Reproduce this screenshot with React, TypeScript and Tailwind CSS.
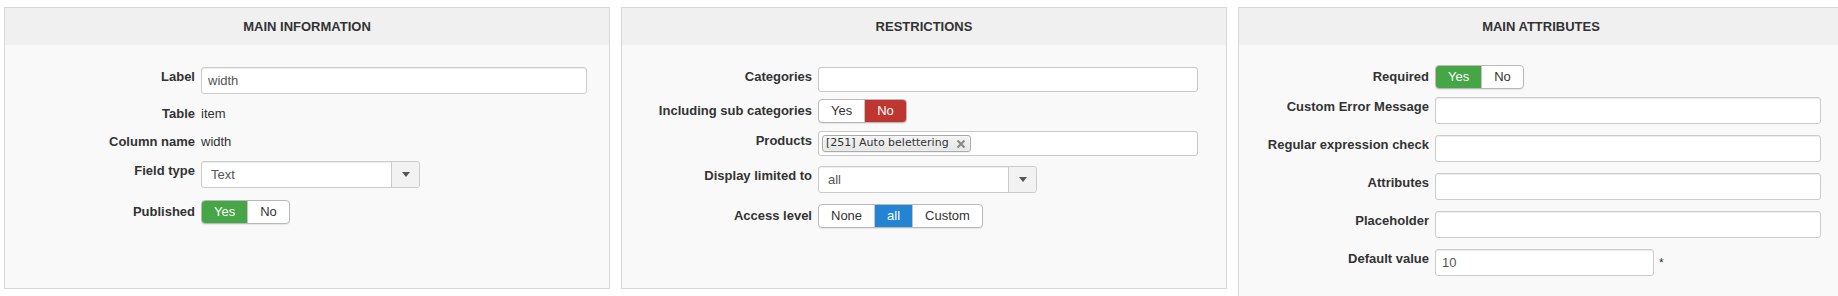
import type { ReactNode } from 'react';

const Panel = ({ title, className, children }: { title: string; className: string; children: ReactNode }) => {
  return (
    <div className={`w-[606px] shrink-0 border border-[#d8d8d8] bg-[#f9f9f9] ${className}`}>
      <div className="h-[37px] flex items-center justify-center bg-[#f0f0f0] text-[13px] font-bold uppercase text-[#333]">
        {title}
      </div>
      <div className="flex flex-col">{children}</div>
    </div>
  );
};

const Row = ({ label, className, labelClass, children }: { label: string; className: string; labelClass: string; children: ReactNode }) => {
  return (
    <div className={`flex items-start ${className}`}>
      <div className={`w-[190px] shrink-0 text-right text-[13px] font-bold leading-[19px] text-[#333] ${labelClass}`}>
        {label}
      </div>
      <div className="ml-[6px] flex items-start">{children}</div>
    </div>
  );
};

const TextInput = ({ value, className }: { value?: string; className: string }) => {
  return (
    <input
      readOnly
      value={value ?? ''}
      className={`h-[27px] rounded-[3px] border border-[#ccc] bg-white px-[6px] text-[13px] text-[#555] shadow-[inset_0_1px_1px_rgba(0,0,0,0.075)] outline-none ${className}`}
    />
  );
};

const Caret = () => (
  <svg width="8" height="5" viewBox="0 0 8 5">
    <path d="M0 0 L8 0 L4 5 Z" fill="#555" />
  </svg>
);

const Select = ({ value }: { value: string }) => {
  return (
    <div className="flex h-[27px] w-[219px] rounded-[3px] border border-[#ccc] bg-white shadow-[inset_0_1px_1px_rgba(0,0,0,0.075)]">
      <div className="flex-1 pl-[9px] text-[13px] leading-[25px] text-[#555]">{value}</div>
      <div className="flex w-[28px] items-center justify-center rounded-r-[3px] border-l border-[#ccc] bg-[#f2f2f2]">
        <Caret />
      </div>
    </div>
  );
};

type Opt = { text: string; on?: string };

const Toggle = ({ options }: { options: Opt[] }) => {
  return (
    <div className="flex h-[24px] overflow-hidden rounded-[4px] border border-[#b9b9b9] bg-white shadow-[0_1px_1px_rgba(0,0,0,0.08)]">
      {options.map((o, i) => (
        <div
          key={o.text}
          className={`flex items-center px-[12px] text-[13px] ${i > 0 ? 'border-l border-[#c4c4c4]' : ''} ${o.on ? `${o.on} text-white` : 'text-[#333]'}`}
        >
          {o.text}
        </div>
      ))}
    </div>
  );
};

const ChosenBox = ({ children }: { children?: ReactNode }) => {
  return (
    <div className="flex h-[25px] w-[380px] items-start rounded-[3px] border border-[#c8c8c8] bg-white pl-[3px] pt-[3px]">
      {children}
    </div>
  );
};

const App = () => {
  return (
    <div className="flex h-[296px] w-[1838px] items-start gap-[11px] overflow-hidden bg-white pl-[4px] pt-[7px] font-['Liberation_Sans',Arial,sans-serif]">
      <Panel title="Main Information" className="h-[282px]">
        <Row label="Label" className="mt-[22px]" labelClass="">
          <TextInput value="width" className="w-[386px]" />
        </Row>
        <Row label="Table" className="mt-[10px]" labelClass="">
          <span className="text-[13px] leading-[19px] text-[#333]">item</span>
        </Row>
        <Row label="Column name" className="mt-[9px]" labelClass="">
          <span className="text-[13px] leading-[19px] text-[#333]">width</span>
        </Row>
        <Row label="Field type" className="mt-[10px]" labelClass="">
          <Select value="Text" />
        </Row>
        <Row label="Published" className="mt-[12px]" labelClass="pt-[2px]">
          <Toggle options={[{ text: 'Yes', on: 'bg-[#46a546]' }, { text: 'No' }]} />
        </Row>
      </Panel>

      <Panel title="Restrictions" className="h-[282px]">
        <Row label="Categories" className="mt-[22px]" labelClass="">
          <ChosenBox />
        </Row>
        <Row label="Including sub categories" className="mt-[7px]" labelClass="pt-[2px]">
          <Toggle options={[{ text: 'Yes' }, { text: 'No', on: 'bg-[#bd362f]' }]} />
        </Row>
        <Row label="Products" className="mt-[8px]" labelClass="">
          <ChosenBox>
            <div className="flex h-[17px] items-center rounded-[3px] border border-[#aaa] bg-gradient-to-b from-[#f4f4f4] to-[#e6e6e6] pl-[3px] pr-[4px] font-['DejaVu_Sans',Verdana,sans-serif] text-[11px] text-[#333] shadow-[0_0_2px_white_inset,0_1px_0_rgba(0,0,0,0.05)]">
              <span>[251] Auto belettering</span>
              <svg className="ml-[7px]" width="10" height="10" viewBox="0 0 10 10">
                <path d="M1.5 1.5 L8.5 8.5 M8.5 1.5 L1.5 8.5" stroke="#8a8a8a" strokeWidth="2.2" />
              </svg>
            </div>
          </ChosenBox>
        </Row>
        <Row label="Display limited to" className="mt-[10px]" labelClass="">
          <Select value="all" />
        </Row>
        <Row label="Access level" className="mt-[11px]" labelClass="pt-[2px]">
          <Toggle options={[{ text: 'None' }, { text: 'all', on: 'bg-[#2384d3]' }, { text: 'Custom' }]} />
        </Row>
      </Panel>

      <Panel title="Main Attributes" className="pb-[24px]">
        <Row label="Required" className="mt-[20px]" labelClass="pt-[2px]">
          <Toggle options={[{ text: 'Yes', on: 'bg-[#46a546]' }, { text: 'No' }]} />
        </Row>
        <Row label="Custom Error Message" className="mt-[8px]" labelClass="">
          <TextInput className="w-[386px]" />
        </Row>
        <Row label="Regular expression check" className="mt-[11px]" labelClass="">
          <TextInput className="w-[386px]" />
        </Row>
        <Row label="Attributes" className="mt-[11px]" labelClass="">
          <TextInput className="w-[386px]" />
        </Row>
        <Row label="Placeholder" className="mt-[11px]" labelClass="">
          <TextInput className="w-[386px]" />
        </Row>
        <Row label="Default value" className="mt-[11px]" labelClass="">
          <TextInput value="10" className="w-[219px]" />
          <span className="ml-[5px] mt-[5px] text-[12px] text-[#333]">*</span>
        </Row>
      </Panel>
    </div>
  );
};

export default App;
